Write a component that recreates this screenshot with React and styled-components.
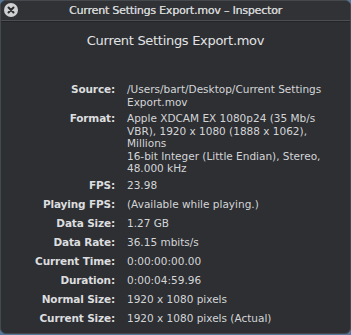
import React from "react"
import styled, { createGlobalStyle } from "styled-components"

const GlobalStyle = createGlobalStyle`
  html, body {
    margin: 0;
    padding: 0;
    background: #56779a;
  }
  body {
    font-family: "DejaVu Sans", "Liberation Sans", sans-serif;
  }
`

const Window = styled.div`
  box-sizing: border-box;
  width: 351px;
  height: 334px;
  background: #2d2f33;
  border: 1px solid #45484d;
  border-radius: 6px;
  overflow: hidden;
  display: flex;
  flex-direction: column;
`

const TitleBar = styled.div`
  position: relative;
  flex: none;
  height: 19px;
  display: flex;
  align-items: center;
  justify-content: center;
  background: #303236;
  border-bottom: 1px solid #4b4e53;
  box-shadow: 0 1px 0 #222427;
`

const TitleText = styled.div`
  font-size: 11px;
  font-weight: normal;
  letter-spacing: -0.2px;
  color: #d2d3d4;
  text-shadow: 0.3px 0 0 #d2d3d4;
`

const CloseButton = styled.div`
  position: absolute;
  left: 3px;
  top: 2px;
  width: 14px;
  height: 14px;
  border-radius: 50%;
  background: #cfd0d2;
  display: flex;
  align-items: center;
  justify-content: center;
`

const Heading = styled.h1`
  margin: 12px 0 0;
  text-align: center;
  font-size: 13px;
  line-height: 16px;
  font-weight: normal;
  letter-spacing: -0.3px;
  color: #e2e3e5;
`

const Rows = styled.div`
  margin-top: 34px;
  display: grid;
  grid-template-columns: 114px 1fr;
  column-gap: 12px;
  row-gap: 4px;
  padding-right: 14px;
`

const Label = styled.div`
  min-height: 15px;
  text-align: right;
  font-size: 10.5px;
  font-weight: bold;
  line-height: 12.5px;
  letter-spacing: -0.15px;
  color: #dcdddf;
  white-space: nowrap;
`

const Value = styled.div`
  min-height: 15px;
  font-size: 10.5px;
  line-height: 12.5px;
  color: #d4d5d7;
`

const rows = [
  ["Source:", ["/Users/bart/Desktop/Current Settings Export.mov"]],
  [
    "Format:",
    [
      "Apple XDCAM EX 1080p24 (35 Mb/s VBR), 1920 x 1080 (1888 x 1062), Millions",
      "16-bit Integer (Little Endian), Stereo, 48.000 kHz",
    ],
  ],
  ["FPS:", ["23.98"]],
  ["Playing FPS:", ["(Available while playing.)"]],
  ["Data Size:", ["1.27 GB"]],
  ["Data Rate:", ["36.15 mbits/s"]],
  ["Current Time:", ["0:00:00:00.00"]],
  ["Duration:", ["0:00:04:59.96"]],
  ["Normal Size:", ["1920 x 1080 pixels"]],
  ["Current Size:", ["1920 x 1080 pixels (Actual)"]],
]

const App = () => (
  <>
    <GlobalStyle />
    <Window>
      <TitleBar>
        <CloseButton>
          <svg width="8" height="8" viewBox="0 0 8 8">
            <path d="M1.5 1.5 L6.5 6.5 M6.5 1.5 L1.5 6.5" stroke="#2b2c2f" strokeWidth="2" strokeLinecap="round" />
          </svg>
        </CloseButton>
        <TitleText>Current Settings Export.mov – Inspector</TitleText>
      </TitleBar>
      <Heading>Current Settings Export.mov</Heading>
      <Rows>
        {rows.map(([label, lines]) => (
          <React.Fragment key={label}>
            <Label>{label}</Label>
            <Value>
              {lines.map((line) => (
                <div key={line}>{line}</div>
              ))}
            </Value>
          </React.Fragment>
        ))}
      </Rows>
    </Window>
  </>
)

export default App
